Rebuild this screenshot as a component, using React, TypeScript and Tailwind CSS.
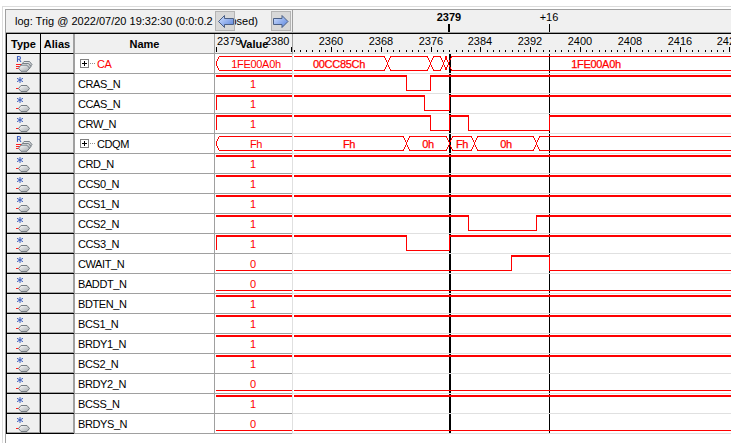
import React from "react";

type Wave = { kind: "bit"; start: 0 | 1; edges: number[] } | { kind: "bus"; cross: number[]; labels: [number, string][] };
type Signal = { name: string; value: string; color?: string; edge?: boolean; wave: Wave };

const bit = (name: string, start: 0 | 1, edges: number[] = [], value = "1", edge = false): Signal => ({
  name, value, edge, wave: { kind: "bit", start, edges },
});

const signals: Signal[] = [
  { name: "CA", value: "1FE00A0h", color: "red", wave: { kind: "bus", cross: [387, 430, 443, 448], labels: [[339, "00CC85Ch"], [596, "1FE00A0h"]] } },
  bit("CRAS_N", 1, [406, 430]),
  bit("CCAS_N", 1, [424, 449], "1", true),
  bit("CRW_N", 1, [430, 449, 468, 549], "1", true),
  { name: "CDQM", value: "Fh", wave: { kind: "bus", cross: [406, 449, 474, 536], labels: [[349, "Fh"], [428, "0h"], [462, "Fh"], [506, "0h"]] } },
  bit("CRD_N", 1),
  bit("CCS0_N", 1),
  bit("CCS1_N", 1),
  bit("CCS2_N", 1, [468, 536]),
  bit("CCS3_N", 1, [406, 449], "1", true),
  bit("CWAIT_N", 0, [511, 549], "0"),
  bit("BADDT_N", 0, [], "0"),
  bit("BDTEN_N", 1),
  bit("BCS1_N", 1),
  bit("BRDY1_N", 1),
  bit("BCS2_N", 1),
  bit("BRDY2_N", 0, [], "0"),
  bit("BCSS_N", 1),
  bit("BRDYS_N", 0, [], "0"),
];

const ORIGIN = 293;

function Bit({ start, edges, from, to }: { start: 0 | 1; edges: number[]; from: number; to: number }) {
  const xs = [from, ...edges, to];
  return (
    <g fill="red">
      {xs.slice(0, -1).map((x, i) => {
        const high = (start + i) % 2 === 1;
        return <rect key={i} x={x} y={high ? 1 : 16} width={xs[i + 1] - x + (i < edges.length ? 1 : 0)} height={high ? 2 : 1} />;
      })}
      {edges.map((x) => <rect key={"e" + x} x={x} y={1} width={1} height={16} />)}
    </g>
  );
}

function Bus({ cross, from, to }: { cross: number[]; from: number; to: number }) {
  const pts = [from, ...cross, to];
  return (
    <g stroke="red" fill="none">
      {pts.slice(0, -1).map((x, i) => {
        const a = x + (i > 0 ? 3 : 0);
        const b = pts[i + 1] - (i < cross.length ? 2 : 0);
        return b > a ? <path key={i} d={`M${a} 2.5H${b}M${a} 16.5H${b}`} /> : null;
      })}
      {cross.map((x) => <path key={"c" + x} d={`M${x - 2.5} 2.5L${x + 3.5} 16.5M${x + 3.5} 2.5L${x - 2.5} 16.5`} />)}
    </g>
  );
}

function TypeIcon({ bus }: { bus: boolean }) {
  return (
    <svg width="33" height="18" viewBox="0 0 33 18" className="block">
      <defs>
        <linearGradient id="pill" x1="0" y1="0" x2="1" y2="1">
          <stop offset="0" stopColor="#ffffff" />
          <stop offset="1" stopColor="#a4a9ad" />
        </linearGradient>
      </defs>
      {bus ? (
        <>
          <path d="M10.5 8V2.5H12Q13.5 2.5 13.5 3.9T12 5.3H10.5M12.2 5.3L14 8" stroke="#3f60c0" strokeWidth="1.1" fill="none" />
          <path d="M9 10.5H14M9 12.5H13M9 14.5H13" stroke="#ff2020" />
          <g fill="url(#pill)" stroke="#6d767e" strokeWidth="0.9">
            <path d="M14.5 10.5L17 7.5H22.5L25 10.5L22.5 13.5H17Z" />
            <path d="M13 12.5L15.5 9.5H21.5L24 12.5L21.5 15.5H15.5Z" />
            <path d="M11.5 14.2L14 11.2H20L22.5 14.2L20 17.3H14Z" />
          </g>
        </>
      ) : (
        <>
          <path d="M13 3V9M10 4.3L16 7.7M16 4.3L10 7.7" stroke="#3f60c0" fill="none" />
          <path d="M9 14.5H12" stroke="#ff2020" />
          <path d="M11.5 14.5L14 11.5H20L22.5 14.5L20 17.5H14Z" fill="url(#pill)" stroke="#777e84" />
        </>
      )}
    </svg>
  );
}

function ArrowButton({ left }: { left: boolean }) {
  return (
    <div className="h-[20px] w-[20px] border border-[#b4b4b4] bg-[#d8d8d8]">
      <svg width="18" height="18" viewBox="0 0 18 18" className="block">
        <defs>
          <linearGradient id="arrow" x1="0" y1="0" x2="1" y2="1">
            <stop offset="0" stopColor="#d6e4ff" />
            <stop offset="1" stopColor="#5580dc" />
          </linearGradient>
        </defs>
        <path
          d={left ? "M2.5 9.5L8.5 3.5V6.5H17.5V12.5H8.5V15.5Z" : "M16 9.5L10 3.5V6.5H1.5V12.5H10V15.5Z"}
          fill="url(#arrow)"
          stroke="#4b5f84"
        />
      </svg>
    </div>
  );
}

function Ruler() {
  const ticks = Array.from({ length: 72 }, (_, i) => 2354 + i);
  return (
    <svg width="438" height="19" className="block" shapeRendering="crispEdges">
      {ticks.map((n) => {
        const x = Math.round(331 + (n - 2360) * 6.225) - ORIGIN;
        const major = n % 8 === 0;
        return (
          <g key={n}>
            <rect x={x} y={major ? 13 : 16} width="1" height={major ? 5 : 2} />
            {major && <text x={x} y="11" textAnchor="middle" fontSize="11">{n}</text>}
          </g>
        );
      })}
    </svg>
  );
}

function Row({ s }: { s: Signal }) {
  const w = s.wave;
  const bus = w.kind === "bus";
  return (
    <div className="flex h-[20px]">
      <div className="w-[35px] border-x border-b border-black bg-[#f0f0f0]">
        <div className="h-[19px] border-b border-r border-[#a0a0a0]"><TypeIcon bus={bus} /></div>
      </div>
      <div className="w-[33px] border-b border-black bg-[#f0f0f0]">
        <div className="h-[19px] border-b border-r border-[#a0a0a0]" />
      </div>
      <div className="flex w-[141px] items-start border-x border-b border-[#a0a0a0] pl-[3px] pt-[4px] tracking-[-0.4px]">
        {bus && (
          <svg width="17" height="9" className="ml-[2px] mt-px shrink-0" shapeRendering="crispEdges">
            <rect x="0.5" y="0.5" width="8" height="8" fill="white" stroke="#808080" />
            <path d="M2 4.5H7M4.5 2V7" stroke="black" />
            <path d="M10 4.5H16" stroke="#909090" strokeDasharray="1 1" />
          </svg>
        )}
        <span className={s.color ? "text-[red]" : ""}>{s.name}</span>
      </div>
      <svg width="78" height="20" className="block shrink-0" shapeRendering="crispEdges">
        <rect x="0" y="19" width="77" height="1" fill="#a0a0a0" />
        <rect x="77" width="1" height="20" fill="#e0e0e0" />
        {w.kind === "bit" ? (
          <>
            <Bit start={w.start} edges={[]} from={1} to={77} />
            {s.edge && <rect x="1" y="1" width="1" height="15" fill="red" />}
          </>
        ) : (
          <path d="M77 2.5H4.5L1.5 7.5V11.5L4.5 16.5H77" stroke="red" fill="none" />
        )}
        <text x={bus ? 41 : 38} y={bus ? 14 : 13.5} fill="red" fontSize="11" letterSpacing={bus ? "-0.3" : "0"} textAnchor="middle">{s.value}</text>
      </svg>
      <svg width="438" height="20" viewBox={`${ORIGIN} 0 438 20`} className="block shrink-0" shapeRendering="crispEdges">
        <rect x="449" width="2" height="19" />
        <rect x="549" width="1" height="19" />
        <rect x="293" y="19" width="438" height="1" fill="#e0e0e0" />
        {w.kind === "bit" ? <Bit start={w.start} edges={w.edges} from={294} to={731} /> : <Bus cross={w.cross} from={294} to={731} />}
        {w.kind === "bus" && w.labels.map(([x, t]) => (
          <text key={x} x={x} y="14" fill="red" stroke="red" strokeWidth="0.25" fontSize="11" letterSpacing="-0.3" textAnchor="middle">{t}</text>
        ))}
      </svg>
    </div>
  );
}

export default function App() {
  return (
    <div className="h-[443px] w-[731px] overflow-hidden bg-white pl-[2px] pt-[6px] font-['Liberation_Sans',Arial,sans-serif] text-[11px] leading-[13px] text-black">
      <div className="h-[437px] border-l border-t border-[#dcdcdc] pl-[2px] pt-[2px]">
        <div className="h-[434px] border-l border-t border-[#a0a0a0]">
          <div className="flex h-[22px] bg-[#f0f0f0]">
            <div className="relative w-[287px] border-r border-[#a0a0a0] pl-[9px] pt-[5px]">
              <span className="whitespace-nowrap">log: Trig @ 2022/07/20 19:32:30 (0:0:0.2 elapsed)</span>
              <div className="absolute left-[209px] top-[1px] flex gap-[36px]">
                <ArrowButton left />
                <ArrowButton left={false} />
              </div>
            </div>
            <svg width="438" height="22" viewBox="293 0 438 22" className="block">
              <text x="449" y="11" fontSize="11" fontWeight="bold" textAnchor="middle">2379</text>
              <text x="549" y="11" fontSize="11" textAnchor="middle">+16</text>
              <rect x="448" y="14" width="2" height="8" />
              <rect x="549" y="14" width="1" height="8" />
            </svg>
          </div>
          <div className="h-[2px] border-b border-black bg-[#a0a0a0]" />
          <div className="flex h-[20px] bg-[#f0f0f0] text-center font-bold">
            <div className="w-[35px] border-x border-b border-black pt-[4px]">Type</div>
            <div className="w-[33px] border-b border-r border-black border-r-[#a0a0a0] pt-[4px]">Alias</div>
            <div className="w-[141px] border-x border-b border-[#a0a0a0] pt-[4px]">Name</div>
            <svg width="78" height="20" className="block" shapeRendering="crispEdges">
              <rect y="19" width="78" height="1" fill="#a0a0a0" />
              <text x="39" y="14" fontSize="11" textAnchor="middle">Value</text>
              <g fontWeight="normal" fontSize="11">
                <text x="2" y="11">2379</text>
                <text x="50" y="11">2380</text>
              </g>
              <rect x="1" y="13" width="1" height="5" />
              <rect x="76" y="13" width="1" height="5" />
              <rect x="77" width="1" height="19" fill="#a0a0a0" />
            </svg>
            <div className="h-[20px] w-[438px] border-b border-[#e0e0e0] font-normal"><Ruler /></div>
          </div>
          {signals.map((s) => <Row key={s.name} s={s} />)}
        </div>
      </div>
    </div>
  );
}
